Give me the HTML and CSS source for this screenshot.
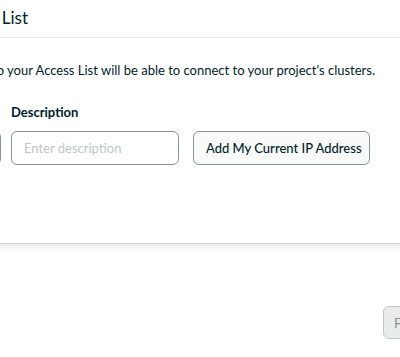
FILE: index.html
```html
<!DOCTYPE html>
<html>
<head>
<meta charset="utf-8">
<link rel="stylesheet" href="styles.css">
</head>
<body>
<div class="page">
  <div class="modal">
    <div class="modal-header">
      <div class="title-box"><h2 class="title">Add IP Access List</h2></div>
    </div>
    <div class="modal-body">
      <div class="intro-box"><p class="intro">Only IP addresses you add to your Access List will be able to connect to your project's clusters.</p></div>
      <div class="form-row">
        <div class="field field-ip">
          <label class="label">Access List Entry</label>
          <input class="input" type="text" placeholder="Enter IP">
        </div>
        <div class="field field-desc">
          <label class="label">Description</label>
          <input class="input" type="text" placeholder="Enter description">
        </div>
        <div class="field field-btn">
          <button class="btn">Add My Current IP Address</button>
        </div>
      </div>
    </div>
  </div>
  <div class="footer">
    <button class="btn-disabled">Finish</button>
  </div>
</div>
</body>
</html>
```

FILE: styles.css
```css
html, body {
  margin: 0;
  padding: 0;
  background: #ffffff;
  overflow: hidden;
  width: 400px;
  height: 357px;
}
.page {
  font-family: Lato, "Open Sans", sans-serif;
  color: #001e2b;
  width: 400px;
  height: 357px;
  overflow: hidden;
  position: relative;
}
.modal {
  margin-left: -400px;
  width: 1200px;
  height: 243px;
  background: #fff;
  box-shadow: 0 3px 8px rgba(0, 30, 43, 0.12), 0 1px 1px rgba(0, 30, 43, 0.08);
  position: relative;
  z-index: 1;
}
.modal-header {
  height: 37px;
  border-bottom: 1px solid #e8edeb;
  display: flex;
  align-items: center;
}
.title-box {
  width: 428px;
  display: flex;
  justify-content: flex-end;
}
.title {
  margin: 0;
  font-size: 17px;
  font-weight: 400;
  white-space: nowrap;
  line-height: 20px;
  padding-bottom: 2px;
}
.modal-body {
  padding-top: 23px;
}
.intro-box {
  width: 775px;
  display: flex;
  justify-content: flex-end;
}
.intro {
  margin: 0;
  font-size: 13px;
  line-height: 18px;
  white-space: nowrap;
}
.form-row {
  display: flex;
  align-items: flex-end;
  margin-top: 24px;
  margin-left: 230px;
}
.field {
  display: flex;
  flex-direction: column;
}
.field-ip {
  width: 171px;
  margin-right: 10px;
}
.field-desc {
  width: 168px;
  margin-right: 14px;
}
.label {
  font-size: 13px;
  font-weight: 700;
  line-height: 18px;
  margin-bottom: 10px;
}
.input {
  box-sizing: border-box;
  height: 34px;
  border: 1px solid #889397;
  border-radius: 6px;
  padding: 0 12px;
  font-family: inherit;
  font-size: 13px;
  color: #001e2b;
  background: #fff;
  outline: none;
}
.input::placeholder {
  color: #c1c7c6;
}
.btn {
  box-sizing: border-box;
  height: 34px;
  width: 177px;
  border: 1px solid #889397;
  border-radius: 6px;
  background: #f9fbfa;
  font-family: inherit;
  font-size: 13px;
  font-weight: 500;
  color: #001e2b;
  padding: 0 12px;
  white-space: nowrap;
}
.footer {
  display: flex;
  padding-top: 63px;
  padding-left: 383px;
}
.btn-disabled {
  box-sizing: border-box;
  height: 33px;
  min-width: 90px;
  border: 1px solid #c1c7c6;
  border-radius: 6px;
  background: #e8edeb;
  color: #889397;
  font-family: inherit;
  font-size: 13px;
  padding: 0 10px;
  text-align: left;
}
```
